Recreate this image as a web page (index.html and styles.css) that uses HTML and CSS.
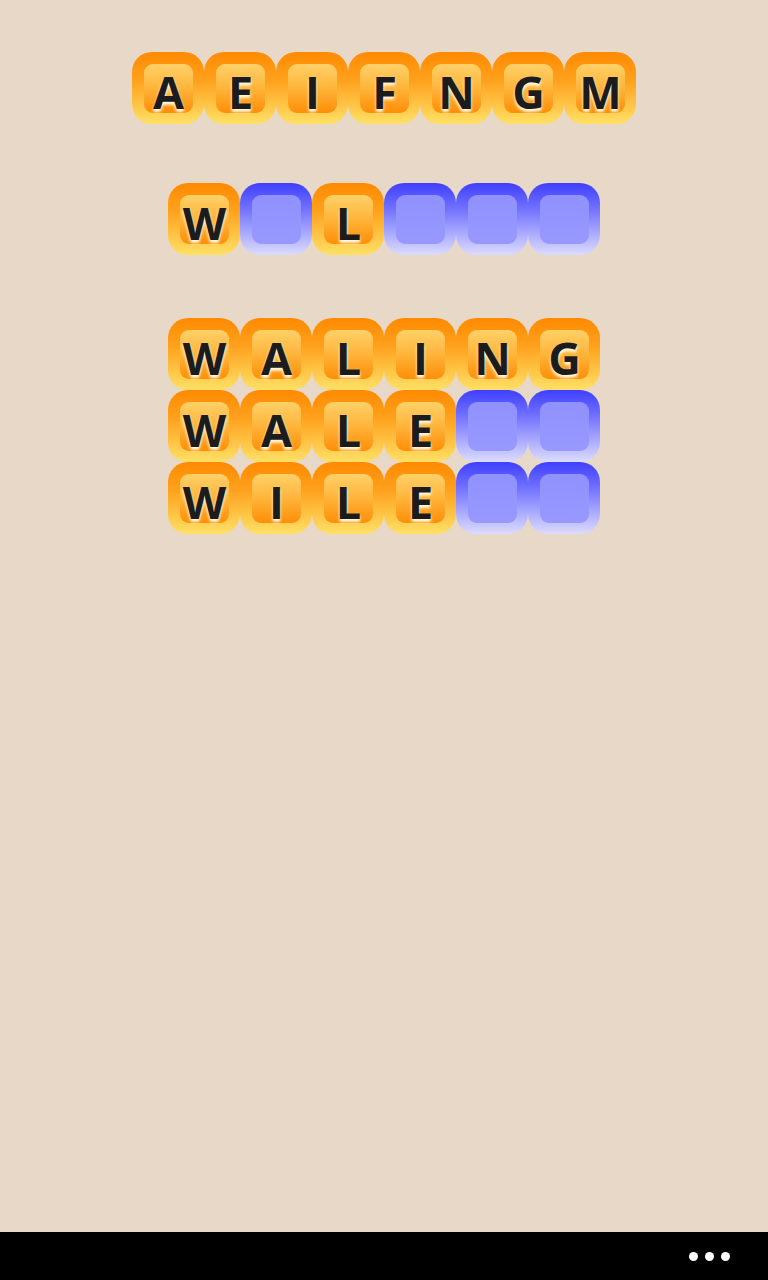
FILE: index.html
```html
<!DOCTYPE html>
<html>
<head>
<meta charset="utf-8">
<link rel="stylesheet" href="styles.css">
</head>
<body>
<div class="screen">
  <main class="content">
    <div class="row row-pool">
      <div class="tile"><span class="face">A</span></div>
      <div class="tile"><span class="face">E</span></div>
      <div class="tile"><span class="face">I</span></div>
      <div class="tile"><span class="face">F</span></div>
      <div class="tile"><span class="face">N</span></div>
      <div class="tile"><span class="face">G</span></div>
      <div class="tile"><span class="face">M</span></div>
    </div>
    <div class="row row-guess">
      <div class="tile"><span class="face">W</span></div>
      <div class="tile empty"><span class="face"></span></div>
      <div class="tile"><span class="face">L</span></div>
      <div class="tile empty"><span class="face"></span></div>
      <div class="tile empty"><span class="face"></span></div>
      <div class="tile empty"><span class="face"></span></div>
    </div>
    <div class="words">
      <div class="row">
        <div class="tile"><span class="face">W</span></div>
        <div class="tile"><span class="face">A</span></div>
        <div class="tile"><span class="face">L</span></div>
        <div class="tile"><span class="face">I</span></div>
        <div class="tile"><span class="face">N</span></div>
        <div class="tile"><span class="face">G</span></div>
      </div>
      <div class="row">
        <div class="tile"><span class="face">W</span></div>
        <div class="tile"><span class="face">A</span></div>
        <div class="tile"><span class="face">L</span></div>
        <div class="tile"><span class="face">E</span></div>
        <div class="tile empty"><span class="face"></span></div>
        <div class="tile empty"><span class="face"></span></div>
      </div>
      <div class="row">
        <div class="tile"><span class="face">W</span></div>
        <div class="tile"><span class="face">I</span></div>
        <div class="tile"><span class="face">L</span></div>
        <div class="tile"><span class="face">E</span></div>
        <div class="tile empty"><span class="face"></span></div>
        <div class="tile empty"><span class="face"></span></div>
      </div>
    </div>
  </main>
  <footer class="appbar">
    <div class="dots"><span></span><span></span><span></span></div>
  </footer>
</div>
</body>
</html>
```
FILE: styles.css
```css
html, body {
  margin: 0;
  padding: 0;
}
body {
  background: #e8d8c7;
  font-family: "Open Sans", "Noto Sans", sans-serif;
}
.screen {
  width: 768px;
  height: 1280px;
  display: flex;
  flex-direction: column;
}
.content {
  flex: 1;
  display: flex;
  flex-direction: column;
  align-items: center;
  padding-top: 52px;
}
.row {
  display: flex;
}
.row-guess {
  margin-top: 59px;
}
.words {
  margin-top: 63px;
  display: flex;
  flex-direction: column;
}
.tile {
  width: 72px;
  height: 72px;
  box-sizing: border-box;
  border-radius: 20px;
  padding: 12px 11px 11px 12px;
  background: linear-gradient(to bottom, #ff8a00 0%, #ffa21e 40%, #ffe066 100%);
  display: flex;
}
.face {
  flex: 1;
  border-radius: 9px;
  background: linear-gradient(to bottom, #ffd168 0%, #ffb43a 50%, #ff8e08 100%);
  display: flex;
  align-items: center;
  justify-content: center;
  font-weight: 700;
  font-size: 45px;
  line-height: 1;
  color: #1c1c1c;
  padding-top: 5px;
  text-shadow: 0 3px 3px #fff6d8, 0 1px 2px #fff0c0;
}
.tile.empty {
  background: linear-gradient(to bottom, #3f3fff 0%, #7070ff 35%, #dcdcff 100%);
}
.tile.empty .face {
  background: linear-gradient(to bottom, #9191ff 0%, #9898ff 100%);
}
.appbar {
  height: 48px;
  background: #000;
  display: flex;
  justify-content: flex-end;
  align-items: center;
  padding-right: 38px;
}
.dots {
  display: flex;
  gap: 7px;
}
.dots span {
  width: 9px;
  height: 9px;
  border-radius: 50%;
  background: #fff;
}
```
